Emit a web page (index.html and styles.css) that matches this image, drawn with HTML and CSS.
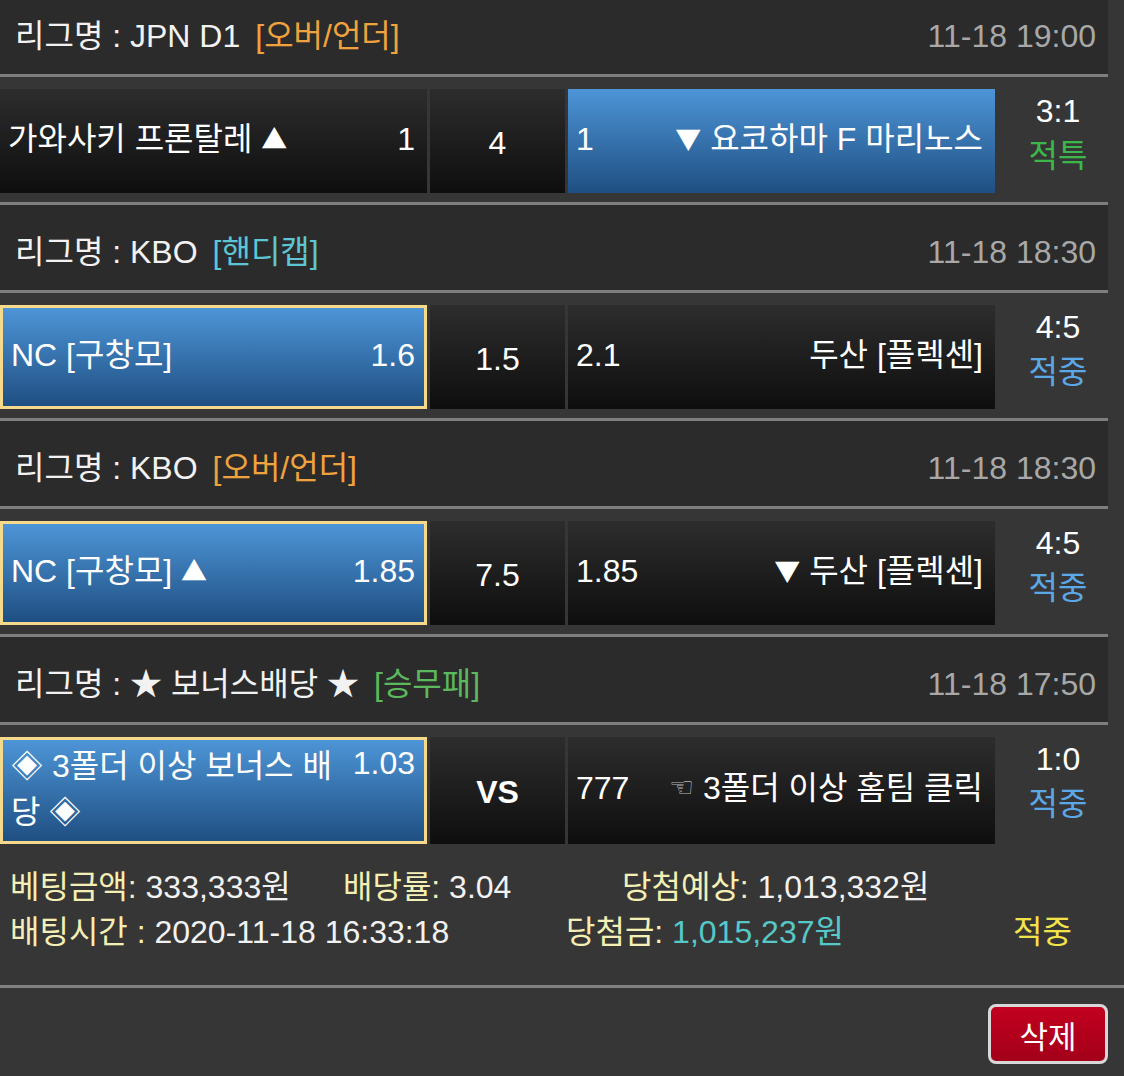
FILE: index.html
```html
<!DOCTYPE html>
<html lang="ko">
<head>
  <meta charset="UTF-8" />
  <meta name="viewport" content="width=device-width, initial-scale=1.0"/>
  <title>배팅내역</title>
  <link rel="stylesheet" href="styles.css">
</head>
<body>

  <div class="slip">
    <!-- 경기 1 -->
    <div class="league first">
      <span class="league-name">리그명 : JPN D1</span>
      <span class="type over">[오버/언더]</span>
      <span class="time">11-18 19:00</span>
    </div>
    <div class="match">
      <div class="pick"><span class="team">가와사키 프론탈레 <span class="tri">▲</span></span><span>1</span></div>
      <div class="pick mid">4</div>
      <div class="pick blue"><span>1</span><span class="team right"><span class="tri">▼</span> 요코하마 F 마리노스</span></div>
      <div class="result"><div>3:1</div><div class="void">적특</div></div>
    </div>

    <!-- 경기 2 -->
    <div class="league">
      <span class="league-name">리그명 : KBO</span>
      <span class="type handi">[핸디캡]</span>
      <span class="time">11-18 18:30</span>
    </div>
    <div class="match">
      <div class="pick blue picked"><span class="team">NC [구창모]</span><span>1.6</span></div>
      <div class="pick mid">1.5</div>
      <div class="pick"><span>2.1</span><span class="team right">두산 [플렉센]</span></div>
      <div class="result"><div>4:5</div><div class="hit">적중</div></div>
    </div>

    <!-- 경기 3 -->
    <div class="league">
      <span class="league-name">리그명 : KBO</span>
      <span class="type over">[오버/언더]</span>
      <span class="time">11-18 18:30</span>
    </div>
    <div class="match">
      <div class="pick blue picked"><span class="team">NC [구창모] <span class="tri">▲</span></span><span>1.85</span></div>
      <div class="pick mid">7.5</div>
      <div class="pick"><span>1.85</span><span class="team right"><span class="tri">▼</span> 두산 [플렉센]</span></div>
      <div class="result"><div>4:5</div><div class="hit">적중</div></div>
    </div>

    <!-- 경기 4 -->
    <div class="league">
      <span class="league-name">리그명 : ★ 보너스배당 ★</span>
      <span class="type wdl">[승무패]</span>
      <span class="time">11-18 17:50</span>
    </div>
    <div class="match last">
      <div class="pick blue picked top"><span class="team wrap">◈ 3폴더 이상 보너스 배당 ◈</span><span>1.03</span></div>
      <div class="pick mid vs">VS</div>
      <div class="pick"><span>777</span><span class="team right"><span class="hand">☜</span> 3폴더 이상 홈팀 클릭</span></div>
      <div class="result"><div>1:0</div><div class="hit">적중</div></div>
    </div>
  </div>

  <div class="summary">
    <div class="line">
      <div class="col c1"><span class="label">베팅금액:</span> 333,333원</div>
      <div class="col c2"><span class="label">배당률:</span> 3.04</div>
      <div class="col"><span class="label">당첨예상:</span> 1,013,332원</div>
    </div>
    <div class="line">
      <div class="col c3"><span class="label">배팅시간 :</span> 2020-11-18 16:33:18</div>
      <div class="col c4"><span class="label">당첨금:</span> <span class="won">1,015,237원</span></div>
      <div class="col state">적중</div>
    </div>
  </div>

  <div class="actions">
    <button class="delete-btn">삭제</button>
  </div>

</body>
</html>
```

FILE: styles.css
```css
body {
  font-family: "Liberation Sans", "Noto Sans CJK KR", sans-serif;
  font-size: 32px;
  line-height: 1.25;
  background-color: #363636;
  color: #f2f2f2;
  margin: 0;
  padding: 0;
  overflow: hidden;
}
.slip {
  width: 1108px;
}
.league {
  display: flex;
  align-items: center;
  height: 88px;
  padding: 8px 12px 0 15px;
  box-sizing: border-box;
  background-color: #2b2b2b;
  border-bottom: 3px solid #7e7e7e;
}
.league.first {
  margin-top: -11px;
}
.type {
  margin-left: 15px;
}
.over {
  color: #f0a23e;
}
.handi {
  color: #5cc6d6;
}
.wdl {
  color: #5cb85c;
}
.time {
  margin-left: auto;
  color: #a8a8a8;
}
.match {
  display: grid;
  grid-template-columns: 427px 135px 427px 1fr;
  gap: 3px;
  height: 128px;
  padding: 12px 0 9px;
  box-sizing: border-box;
  border-bottom: 3px solid #7e7e7e;
}
.match.last {
  border-bottom: none;
}
.pick {
  display: flex;
  align-items: center;
  justify-content: space-between;
  padding: 0 12px 5px 8px;
  background: linear-gradient(#2d2d2d, #0e0e0e);
  color: #fff;
}
.pick.mid {
  justify-content: center;
  padding: 3px 0 0;
}
.pick.vs {
  font-weight: bold;
}
.pick.blue {
  background: linear-gradient(#4d95d7, #1f4f82);
}
.pick.picked {
  border: 3px solid #f6d98a;
  padding: 0 9px 5px 8px;
}
.pick.top {
  align-items: flex-start;
  padding-top: 3px;
}
.pick .team.wrap {
  width: 340px;
  line-height: 46px;
  word-break: break-all;
}
.tri {
  font-family: "Noto Sans CJK KR", sans-serif;
  font-size: 26px;
  vertical-align: 1px;
}
.hand {
  font-family: "DejaVu Sans", sans-serif;
  font-size: 28px;
  color: #b8b8b8;
  vertical-align: 2px;
}
.result {
  text-align: center;
  line-height: 45px;
  padding-left: 10px;
  color: #fff;
}
.void {
  color: #3cb84a;
}
.hit {
  color: #5ca8e6;
}
.summary {
  padding: 12px 10px 30px;
  border-bottom: 3px solid #808080;
}
.line {
  display: flex;
  line-height: 45px;
}
.col.c1 {
  width: 333px;
}
.col.c2 {
  width: 279px;
}
.col.c3 {
  width: 556px;
}
.col.c4 {
  width: 447px;
}
.label {
  color: #f4efb5;
}
.won {
  color: #56c8c8;
}
.state {
  color: #f2e34a;
}
.actions {
  display: flex;
  justify-content: flex-end;
  padding: 16px 16px 0;
}
.delete-btn {
  width: 120px;
  height: 60px;
  font-family: inherit;
  font-size: 31px;
  color: #fff;
  background: linear-gradient(#c2001f, #a3001a);
  border: 3px solid #d8d8d8;
  border-radius: 8px;
  cursor: pointer;
}
```
